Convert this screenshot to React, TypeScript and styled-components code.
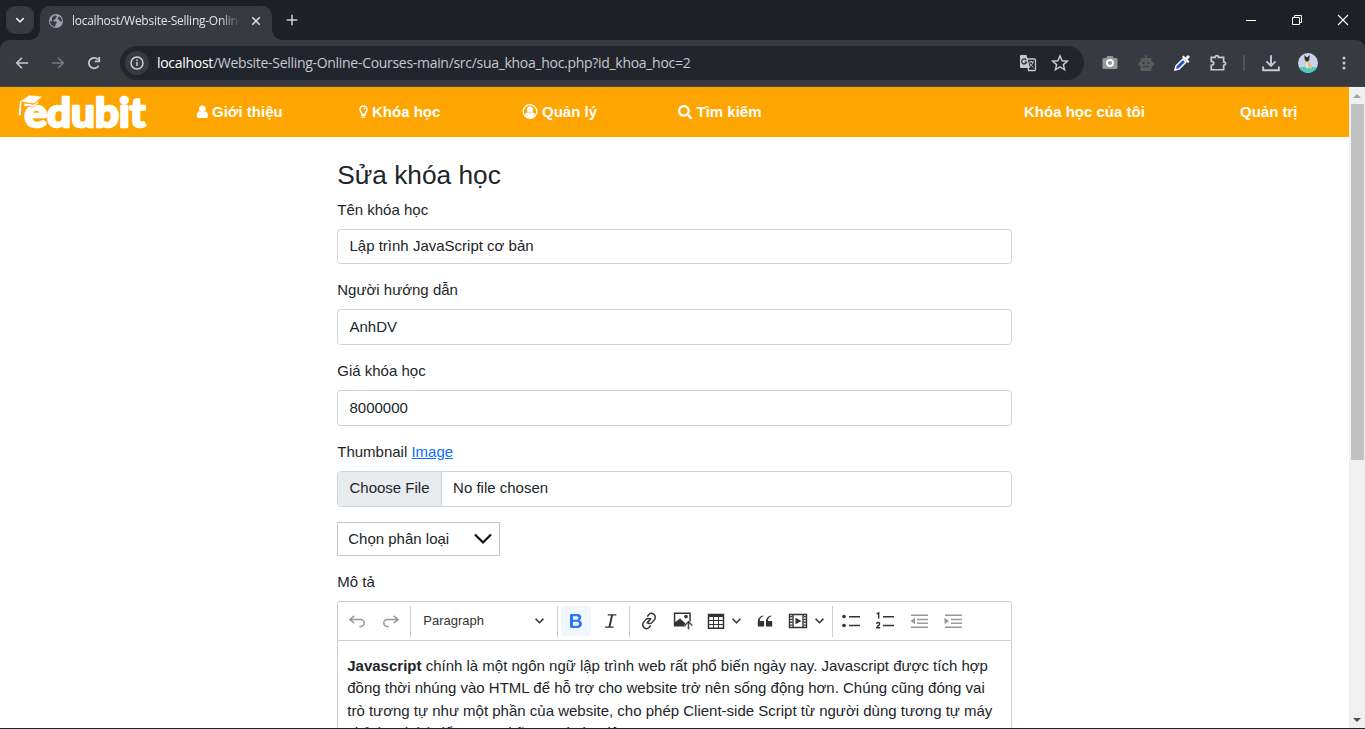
import React from "react";
import styled, { createGlobalStyle } from "styled-components";
import { FaSearch } from "react-icons/fa";

const Global = createGlobalStyle`
  *, *::before, *::after { box-sizing: border-box; }
  html { font-size: 15px; }
  body { margin: 0; overflow: hidden; background: #fff; font-family: "Liberation Sans", Arial, sans-serif; font-size: 15px; line-height: 1.5; color: #212529; }
  svg { display: block; flex: none; }
`;

const Window = styled.div`
  display: flex; flex-direction: column; width: 1365px; height: 729px; overflow: hidden;
  border-bottom: 1px solid #202124;
`;
const TabStrip = styled.div`
  display: flex; height: 40px; flex: none; background: #1d2027; padding-left: 6px;
  font-family: "Open Sans", "Segoe UI", sans-serif;
`;
const TabSearch = styled.div`
  width: 28px; height: 28px; margin-top: 6px; border-radius: 9px; background: #383a42;
  display: flex; align-items: center; justify-content: center;
`;
const Tab = styled.div`
  position: relative; display: flex; align-items: center; width: 232px; height: 34px; margin: 6px 0 0 6px;
  padding: 0 9px 5px 8px; border-radius: 10px 10px 0 0; background: #383a42;
  &::before, &::after {
    content: ""; position: absolute; bottom: 0; width: 10px; height: 10px;
  }
  &::before { left: -10px; background: radial-gradient(circle at 0 0, transparent 9.5px, #383a42 10px); }
  &::after { right: -10px; background: radial-gradient(circle at 100% 0, transparent 9.5px, #383a42 10px); }
`;
const TabTitle = styled.div`
  width: 167px; margin: 0 12px 0 8px; overflow: hidden; white-space: nowrap; font-size: 12px; line-height: 18px;
  letter-spacing: -0.26px; color: #e3e4e8;
  mask-image: linear-gradient(90deg, #000 148px, transparent 168px);
`;
const NewTab = styled.div`
  display: flex; align-items: center; margin-left: 14px; flex: 1;
`;
const WindowButtons = styled.div`
  display: flex; align-items: center; gap: 34px; padding-right: 16px;
`;
const BarBack = styled.div`
  flex: none; height: 47px; background: #1d2027;
`;
const AddressBar = styled.div`
  display: flex; align-items: center; height: 47px; padding: 0 13px 1px 15px; background: #383a42;
  border-radius: 9px 9px 0 0; border-bottom: 1px solid #4a4b50;
`;
const NavButtons = styled.div`
  display: flex; gap: 22px; width: 105px;
`;
const Omnibox = styled.div`
  display: flex; align-items: center; width: 964px; height: 34px; border-radius: 17px; background: #22252c;
  padding: 0 15px 0 5px;
`;
const SiteInfo = styled.div`
  display: flex; align-items: center; justify-content: center; width: 24px; height: 24px; border-radius: 50%; background: #383a42;
`;
const Url = styled.div`
  flex: 1; margin-left: 8px; font: 14px/20px "Open Sans", "Segoe UI", sans-serif; letter-spacing: -0.3px; color: #c6c9d0;
  white-space: nowrap;
  b { font-weight: 400; color: #fff; }
`;
const OmniIcons = styled.div`
  display: flex; gap: 14px; align-items: center;
`;
const Extensions = styled.div`
  display: flex; flex: 1; align-items: center; justify-content: space-between; padding-left: 17px;
`;
const Divider = styled.i`
  width: 2px; height: 16px; margin: 0 -1px 0 -1px; background: #51535a;
`;

const Viewport = styled.div`
  display: flex; flex: 1; min-height: 0;
`;
const Page = styled.div`
  width: 1349px; overflow: hidden; background: #fff;
`;
const Header = styled.header`
  display: flex; align-items: center; height: 50px; background: #ffa500; color: #fff; padding-left: 18px;
`;
const Brand = styled.div`
  width: 178px;
`;
const MenuItem = styled.a<{ $w: number }>`
  display: flex; align-items: center; width: ${(p) => p.$w}px; gap: 4px; font-weight: 700; line-height: 22px; white-space: nowrap;
`;
const Form = styled.main`
  width: 674.5px; margin: 0 auto; padding-top: 22.5px;
`;
const Title = styled.h3`
  margin: 0 0 7.5px; font-size: 26.25px; font-weight: 400; line-height: 31.5px;
`;
const Label = styled.label`
  display: block; height: 22.5px; margin-bottom: 7.5px;
  a { color: #0d6efd; text-decoration: underline; }
`;
const Field = styled.div`
  display: flex; height: 35.75px; margin-bottom: 15px; padding: 5.625px 11.25px; border: 1px solid #ced4da;
  border-radius: 3.75px; overflow: hidden; background: #fff;
`;
const FileButton = styled.span`
  height: 35px; margin: -5.625px 11.25px -5.625px -11.25px; padding: 5.625px 11.25px; background: #e9ecef; border-right: 1px solid #ced4da;
`;
const Select = styled.div`
  display: flex; align-items: center; justify-content: space-between; width: 163px; height: 34.5px; margin-bottom: 15px;
  padding: 0 7px 0 10px; border: 1px solid #c8c8c8;
`;
const Toolbar = styled.div`
  display: flex; align-items: center; height: 40px; border: 1px solid #ccced1; border-radius: 2px 2px 0 0; padding-left: 2px;
`;
const Tool = styled.span<{ $on?: boolean; $w?: number; $dim?: boolean }>`
  display: flex; align-items: center; justify-content: center; width: ${(p) => p.$w ?? 30}px; height: 30px; margin: 0 2px;
  border-radius: 2px; background: ${(p) => (p.$on ? "#f0f7ff" : "transparent")}; color: ${(p) => (p.$on ? "#2977ff" : "#333")};
  opacity: ${(p) => (p.$dim ? 0.5 : 1)}; gap: 7px;
`;
const Sep = styled.i`
  width: 1px; height: 31px; background: #ccced1; margin: 0 1px 0 2px;
`;
const Heading = styled.span`
  display: flex; align-items: center; justify-content: space-between; width: 139px; padding: 0 9px 0 9px; margin: 0 2px; font-size: 13px; color: #333;
`;
const Content = styled.div`
  height: 200px; padding: 13.5px 9px; border: 1px solid #ccced1; border-top: 0; white-space: nowrap;
  p { margin: 0; }
`;
const Scrollbar = styled.div`
  display: flex; flex-direction: column; align-items: center; width: 16px; background: #f0f0f0;
`;
const ScrollButton = styled.div`
  display: flex; align-items: center; justify-content: center; height: 17px; width: 16px;
`;
const Thumb = styled.div`
  width: 13px; height: 356px; background: #c1c1c1; margin-left: 1px;
`;
const Track = styled.div`flex: 1;`;

const Ck = ({ d, size = 20 }: { d: string; size?: number }) => (
  <svg width={size} height={size} viewBox="0 0 20 20" fill="currentColor"><path d={d} /></svg>
);
const Chevron = () => (
  <svg width="9" height="6" viewBox="0 0 9 6" fill="none" stroke="currentColor" strokeWidth="1.6"><path d="M.6.7 4.5 4.7 8.4.7" /></svg>
);
const Line = ({ d, w = 16, sw = 1.7, c = "#c7c9d1" }: { d: string; w?: number; sw?: number; c?: string }) => (
  <svg width={w} height={w} viewBox="0 0 16 16" fill="none" stroke={c} strokeWidth={sw}><path d={d} /></svg>
);

const Globe = () => (
  <svg width="16" height="16" viewBox="0 0 16 16">
    <circle cx="8" cy="8" r="7" fill="#9fa2aa" />
    <path d="M7 2.6c2 0 2.5 1.2 1.2 2-1.2.7-.2 1.9-2 2.1-1.5.1-.8 1.7.5 1.7 1.8 0 2.3.5 2 1.6-.4 1.2-1.6 1.1-1.7 3.7C4 13.5 2 10.9 2 8c2 1 2.2.2 1.9-1.3C3.800 4.500 5 3 7 2.600ZM10.500 3c2.200 1 3.500 3 3.500 5.300-1.100.5-2.300.1-2.600-.9-.3-1.200-1.900-1-1.500-2.300.2-.8.7-.8.6-2.100Z" fill="#383a42" />
  </svg>
);

const Translate = () => (
  <svg width="18" height="18" viewBox="0 0 18 18">
    <path d="M8 5h7.500q1 0 1 1v9.500q0 1-1 1H9.500Z" fill="#25272e" stroke="#c7c9d1" strokeWidth="1.300" />
    <path d="M2 1h5.500l3.500 13H2q-1 0-1-1V2q0-1 1-1Z" fill="#c7c9d1" />
    <path d="M7.200 6A2.500 2.500 0 1 0 7.600 8H5.500" fill="none" stroke="#25272e" strokeWidth="1.200" />
    <path d="M10 8h5M12.400 7v1M14 8c-.5 2-1.700 3.500-3 4.500M11 9.500c.7 1.500 2 2.800 3.500 4" fill="none" stroke="#c7c9d1" />
  </svg>
);

const Avatar = () => (
  <svg width="20" height="20" viewBox="0 0 20 20">
    <clipPath id="avatar"><circle cx="10" cy="10" r="10" /></clipPath>
    <g clipPath="url(#avatar)">
      <path d="M0 0h20v20H0Z" fill="#c9d3ea" />
      <path d="M0 14.500q10-1.500 20 0V20H0Z" fill="#45cdbf" />
      <path d="M7 6h3.500l1 4q3 1 2.500 5.500H7.500Z" fill="#d8c09a" />
      <path d="m6.200 2 2 2h1.500l2.100-2-.5 5-2.200 2-2.300-2Z" fill="#3b302b" />
      <path d="M8 9h2v6H8Z" fill="#f0e0c0" />
    </g>
  </svg>
);

const Logo = () => (
  <svg width="130" height="42" viewBox="0 0 130 42">
    <text x="6.500" y="36" textLength="121" lengthAdjust="spacingAndGlyphs" fontFamily="Lato, sans-serif" fontSize="40" fontWeight="700" fill="#fff" stroke="#fff" strokeWidth="2.600" strokeLinejoin="round">edubit</text>
    <path d="M1.500 10.500 11.500 4l13 1.500L16 12.800Z" fill="#fff" stroke="#ffa500" strokeWidth=".6" />
    <path d="M6 12v4q5-2.300 9.500.3l5-4.300V9.800L16 13.500Z" fill="#fff" stroke="#ffa500" strokeWidth=".6" />
    <path d="m2 10.500-.7 6.500-.6 7 2 .5.500-7 .1-6.500Z" fill="#fff" />
  </svg>
);

export default function App() {
  return (
    <Window>
      <Global />
      <TabStrip>
        <TabSearch><Line w={12} sw={2.200} c="#e3e4e8" d="m3 5.500 5 5 5-5" /></TabSearch>
        <Tab>
          <Globe />
          <TabTitle>localhost/Website-Selling-Online</TabTitle>
          <Line w={10} sw={2.300} c="#e3e4e8" d="m2 2 12 12M14 2 2 14" />
        </Tab>
        <NewTab><Line w={12} sw={2} c="#d0d2d8" d="M8 1v14M1 8h14" /></NewTab>
        <WindowButtons>
          <svg width="12" height="12" stroke="#fff"><path d="M1 6.500h10" /></svg>
          <svg width="12" height="12" fill="none" stroke="#fff"><path d="M1.500 3.500h7v7h-7zM3.500 3V1.500h7v7H9" /></svg>
          <svg width="12" height="12" stroke="#fff" strokeWidth="1.100"><path d="m1 1 10 10M11 1 1 11" /></svg>
        </WindowButtons>
      </TabStrip>
      <BarBack>
        <AddressBar>
          <NavButtons>
            <Line w={14} sw={1.800} d="M15 8H2M8 2 2 8l6 6" />
            <Line w={14} sw={1.800} c="#777980" d="M1 8h13M8 2l6 6-6 6" />
            <Line w={14} sw={2} d="M13.300 11A6 6 0 1 1 12.500 4M14 1v5H9" />
          </NavButtons>
          <Omnibox>
            <SiteInfo>
              <svg width="14" height="14" fill="none" stroke="#d5d7dd" strokeWidth="1.400"><circle cx="7" cy="7" r="6" /><path d="M7 6v4M7 3.500v1.400" /></svg>
            </SiteInfo>
            <Url><b>localhost</b>/Website-Selling-Online-Courses-main/src/sua_khoa_hoc.php?id_khoa_hoc=2</Url>
            <OmniIcons>
              <Translate />
              <Line w={18} sw={1.300} d="m8 1.700 1.900 4.300 4.600.4-3.500 3 1.100 4.600L8 11.500 3.900 14 5 9.400l-3.500-3L6.100 6Z" />
            </OmniIcons>
          </Omnibox>
          <Extensions>
            <svg width="18" height="16" viewBox="0 0 18 16"><path d="M2 3h3l1.500-2h5L13 3h2q1.500 0 1.500 1.500v8Q16.500 14 15 14H3q-1.500 0-1.500-1.500v-8Q1.500 3 3 3Z" fill="#979797" /><circle cx="9" cy="8" r="3" fill="none" stroke="#fff" strokeWidth="1.800" /></svg>
            <svg width="18" height="18" viewBox="0 0 18 18" fill="#5b5b59"><path d="M8.300 1h1.400v3h3.800q1 0 1 1v3h1.200q1 0 1 2t-1 2h-1.200v4q0 1-1 1h-9q-1 0-1-1v-4H2.300q-1 0-1-2t1-2h1.200V5q0-1 1-1h3.800Z" /><path d="M5.500 8h2v2h-2zM10.500 8h2v2h-2zM6 12h6v1.300H6z" fill="#3d3e43" /></svg>
            <svg width="18" height="18" viewBox="0 0 18 18"><path d="m2 16 1-4 7-7 3 3-7 7Z" fill="#2448c8" stroke="#fff" strokeWidth="1.500" /><path d="m9 3 6 6 1.500-1.500-2-2L17 3l-2-2-2.500 2.500-2-2Z" fill="#fff" /></svg>
            <Line w={18} sw={1.500} d="M2 3h3.500q0-1.500 1.500-1.500T8.500 3H13v4q1.700 0 1.700 1.500T13 10v4H2v-4q2.200 0 2.200-1.700T2 6.500Z" />
            <Divider />
            <Line w={18} sw={1.700} d="M8 1v9M4 6.500 8 10.500l4-4M1 11v3.500h14V11" />
            <Avatar />
            <svg width="16" height="16" fill="#c7c9d1"><circle cx="8" cy="3" r="1.500" /><circle cx="8" cy="8" r="1.500" /><circle cx="8" cy="13" r="1.500" /></svg>
          </Extensions>
        </AddressBar>
      </BarBack>
      <Viewport>
        <Page>
          <Header>
            <Brand><Logo /></Brand>
            <MenuItem $w={163}>
              <svg width="12" height="14" viewBox="0 0 12 14" fill="#fff"><circle cx="6.300" cy="3.800" r="3.300" /><path d="M3.300 6.300q3 2 6 0 2.600.5 2.600 4.700 0 2-1.500 2H2.200q-1.500 0-1.500-2Q.7 6.800 3.300 6.300Z" /></svg>
              Giới thiệu
            </MenuItem>
            <MenuItem $w={163}>
              <svg width="9" height="14" viewBox="0 0 9 14" fill="none" stroke="#fff"><path d="M3 9.500C3 7.500 1 7 1 4.500a3.500 3.500 0 0 1 7 0C8 7 6 7.500 6 9.500Z" strokeWidth="1.500" /><path d="M2.500 10.500h4M2.500 12.200h4M4.500 3q1.500 0 1.500 1.300" strokeWidth="1.200" /></svg>
              Khóa học
            </MenuItem>
            <MenuItem $w={156}>
              <svg width="16" height="16" viewBox="0 0 16 16" fill="#fff"><circle cx="8" cy="7.500" r="6.800" fill="none" stroke="#fff" strokeWidth="1.300" /><circle cx="8" cy="5.700" r="3.100" /><path d="M5.300 8.200q2.700 2 5.400 0 1.800.6 2.300 3.200-2 2.600-5 2.600t-5-2.600q.5-2.600 2.300-3.200Z" /></svg>
              Quản lý
            </MenuItem>
            <MenuItem $w={346}><FaSearch size={14.5} />Tìm kiếm</MenuItem>
            <MenuItem $w={216}>Khóa học của tôi</MenuItem>
            <MenuItem $w={80}>Quản trị</MenuItem>
          </Header>
          <Form>
            <Title>Sửa khóa học</Title>
            <Label>Tên khóa học</Label>
            <Field>Lập trình JavaScript cơ bản</Field>
            <Label>Người hướng dẫn</Label>
            <Field>AnhDV</Field>
            <Label>Giá khóa học</Label>
            <Field>8000000</Field>
            <Label>Thumbnail <a>Image</a></Label>
            <Field><FileButton>Choose File</FileButton>No file chosen</Field>
            <Select>
              Chọn phân loại
              <svg width="18" height="12" fill="none" stroke="#111" strokeWidth="2.200"><path d="m1 1.500 8 8 8-8" /></svg>
            </Select>
            <Label>Mô tả</Label>
            <Toolbar>
              <Tool $dim><Ck d="m5.042 9.367 2.189 1.837a.75.75 0 0 1-.965 1.149l-3.788-3.180a.747.747 0 0 1-.210-.284.75.75 0 0 1 .170-.945L6.230 4.762a.75.75 0 1 1 .964 1.150L4.863 7.866h8.917A4.220 4.220 0 0 1 18 12.086a4.220 4.220 0 0 1-4.220 4.220H12.500v-1.500h1.280a2.720 2.720 0 0 0 0-5.439H5.042Z" /></Tool>
              <Tool $dim><Ck d="m14.958 9.367-2.189 1.837a.75.75 0 0 0 .965 1.149l3.788-3.180a.747.747 0 0 0 .210-.284.75.75 0 0 0-.170-.945L13.770 4.762a.75.75 0 1 0-.964 1.150l2.331 1.954H6.220A4.220 4.220 0 0 0 2 12.086a4.220 4.220 0 0 0 4.220 4.220h1.280v-1.500H6.220a2.720 2.720 0 0 1 0-5.439h8.738Z" /></Tool>
              <Sep />
              <Heading>Paragraph<Chevron /></Heading>
              <Sep />
              <Tool $on><Ck d="M10.187 17H5.773c-.637 0-1.092-.138-1.364-.415-.273-.277-.409-.718-.409-1.323V4.738c0-.617.140-1.062.419-1.332.279-.270.730-.406 1.354-.406h4.680c.690 0 1.288.041 1.793.124.506.083.960.242 1.360.477.341.197.644.447.906.750a3.262 3.262 0 0 1 .808 2.162c0 1.401-.722 2.426-2.167 3.075C15.050 10.175 16 11.315 16 13.010a3.756 3.756 0 0 1-2.296 3.504 6.100 6.100 0 0 1-1.517.377c-.571.073-1.238.110-2 .110Zm-.217-6.217H7v4.087h3.069c1.977 0 2.965-.690 2.965-2.072 0-.707-.256-1.220-.768-1.537-.512-.319-1.277-.478-2.296-.478ZM7 5.130v3.619h2.606c.729 0 1.292-.067 1.690-.200a1.600 1.600 0 0 0 .910-.765c.165-.267.247-.566.247-.897 0-.707-.260-1.176-.778-1.409-.519-.232-1.310-.348-2.375-.348H7Z" /></Tool>
              <Tool><Ck size={18} d="M7.500 2.500h9.500v1.300h-3.700L10.600 16.200h3.400v1.300H4.500v-1.300h3.900L11.100 3.800H7.500Z" /></Tool>
              <Sep />
              <Tool $w={31}><svg width="18" height="18" viewBox="0 0 20 20" fill="none" stroke="currentColor" strokeWidth="1.600"><path d="m8 5 2-2.200c3-3 8.500.2 6.500 5.200l-3 3.500c-1.500 1.700-4 1.500-5.300.1M12 15l-2 2.200c-3 3-8.500-.2-6.500-5.200l3-3.500c1.500-1.700 4-1.500 5.300-.1M7.500 12.500l5-5.500" /></svg></Tool>
              <Tool><svg width="20" height="20" viewBox="0 0 20 20" fill="currentColor"><path d="M.8 1.500h17v9h-1.500V3h-14v8L7 7.500l5.500 5V15.500H.8Z" /><circle cx="13" cy="5.600" r="1.800" /><path d="m15.500 9.500 4.300 4.700-1 1-2.500-2.700v6h-1.600v-6l-2.500 2.700-1-1Z" stroke="#fff" strokeWidth=".3" /></svg></Tool>
              <Tool $w={44}><svg width="18" height="18" viewBox="0 0 18 18" fill="none" stroke="currentColor"><path d="M1.500 2.500h15v13.800h-15Z" strokeWidth="1.500" /><path d="M1 3.500h16" strokeWidth="3" /><path d="M1 8.500h16M1 12.500h16M6.500 4v12M11.500 4v12" /></svg><Chevron /></Tool>
              <Tool><svg width="18" height="18" viewBox="0 0 20 20" fill="currentColor"><path d="M2 10.423a6.500 6.500 0 0 1 6.056-6.408l.038.670C5.448 5.423 4.354 7.663 4.220 10H8.500c.552 0 .5.432.5.986v4.511c0 .554-.448.503-1 .503H2.500c-.552 0-.5-.449-.5-1.003v-4.574Zm9 0a6.500 6.500 0 0 1 6.056-6.408l.038.670c-2.646.739-3.740 2.979-3.873 5.315H17.500c.552 0 .5.432.5.986v4.511c0 .554-.448.503-1 .503h-5.500c-.552 0-.5-.449-.5-1.003v-4.574Z" /></svg></Tool>
              <Tool $w={44}><svg width="20" height="18" viewBox="0 0 20 18" fill="none" stroke="currentColor"><path d="M1.500 2.500h17v13h-17ZM5 2v14M15 2v14" strokeWidth="1.400" /><path d="M3.200 4v11M16.800 4v11" strokeWidth="2" strokeDasharray="1.300 1.500" /><path d="m7.500 5.800 6 3.200-6 3.200Z" fill="currentColor" stroke="none" /></svg><Chevron /></Tool>
              <Sep />
              <Tool><svg width="18" height="18" viewBox="0 0 18 18" fill="currentColor"><circle cx="2" cy="4.500" r="1.800" /><circle cx="2" cy="13.500" r="1.800" /><path d="M7 4h11v1.400H7zM7 12.800h11v1.400H7z" /></svg></Tool>
              <Tool><svg width="18" height="20" viewBox="0 0 18 20"><path d="M7 5h11v1.400H7zM7 13.800h11v1.400H7z" fill="currentColor" /><path d="m.7 3 2-1v5.500M.5 12.800q.3-1.300 1.600-1.300c2 0 2 2 0 3.300L.7 16.700h3.500" fill="none" stroke="currentColor" strokeWidth="1.400" /></svg></Tool>
              <Tool $dim><svg width="18" height="18" viewBox="0 0 18 18" fill="currentColor"><path d="M1 2.500h17V4H1zM7 6.800h11v1.400H7zM7 10.500h11V12H7zM1 14.500h17V16H1zM5 5.800v6.500L.5 9Z" /></svg></Tool>
              <Tool $dim><svg width="18" height="18" viewBox="0 0 18 18" fill="currentColor"><path d="M1 2.500h17V4H1zM7 6.800h11v1.400H7zM7 10.500h11V12H7zM1 14.500h17V16H1zM.5 5.800v6.500L5 9Z" /></svg></Tool>
            </Toolbar>
            <Content>
              <p><b>Javascript</b> chính là một ngôn ngữ lập trình web rất phổ biến ngày nay. Javascript được tích hợp</p>
              <p>đồng thời nhúng vào HTML để hỗ trợ cho website trở nên sống động hơn. Chúng cũng đóng vai</p>
              <p>trò tương tự như một phần của website, cho phép Client-side Script từ người dùng tương tự máy</p>
              <p>chủ (Nodejs) để tạo ra những website động.</p>
            </Content>
          </Form>
        </Page>
        <Scrollbar>
          <ScrollButton><svg width="8" height="4"><path d="M0 4 4 0l4 4Z" fill="#a3a3a3" /></svg></ScrollButton>
          <Thumb />
          <Track />
          <ScrollButton><svg width="8" height="4"><path d="m0 0 4 4 4-4Z" fill="#505050" /></svg></ScrollButton>
        </Scrollbar>
      </Viewport>
    </Window>
  );
}
